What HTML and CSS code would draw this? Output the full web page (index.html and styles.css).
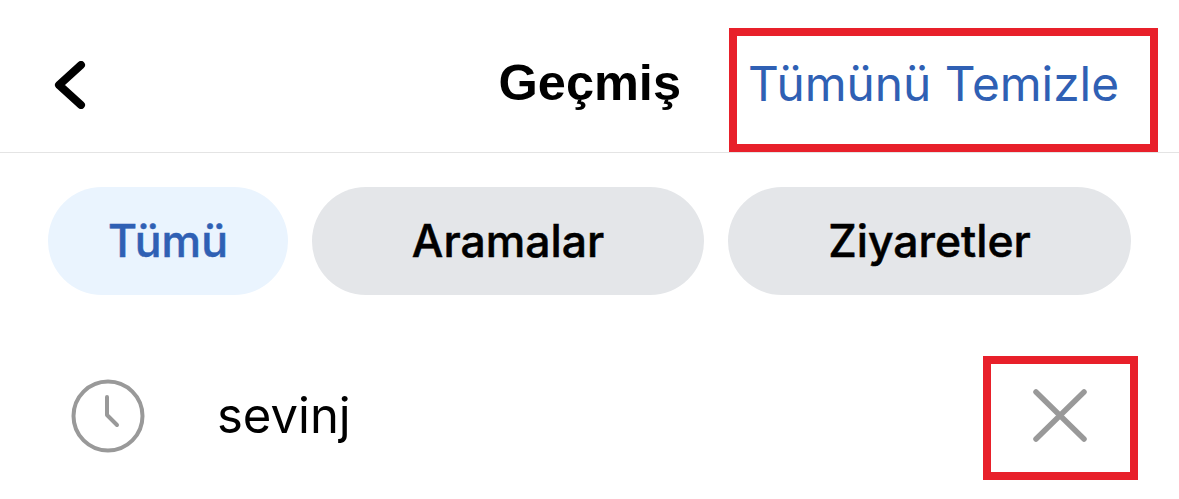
FILE: index.html
```html
<!DOCTYPE html>
<html lang="tr">
<head>
    <meta charset="UTF-8">
    <meta name="viewport" content="width=device-width, initial-scale=1.0">
    <title>Geçmiş</title>
    <link rel="stylesheet" href="styles.css">
</head>
<body>
    <header class="header">
        <button class="back" aria-label="Geri">
            <svg width="32" height="48" viewBox="0 0 32 48">
                <path d="M27 4 L5 24 L27 44" fill="none" stroke="#000" stroke-width="8" stroke-linecap="round" stroke-linejoin="round"/>
            </svg>
        </button>
        <h1 class="title">Geçmiş</h1>
        <button class="clear-all">Tümünü Temizle</button>
    </header>

    <div class="tabs">
        <button class="tab tab-active">Tümü</button>
        <button class="tab">Aramalar</button>
        <button class="tab">Ziyaretler</button>
    </div>

    <div class="history-row">
        <svg class="clock" width="74" height="74" viewBox="0 0 74 74">
            <circle cx="37" cy="37" r="34.5" fill="none" stroke="#999" stroke-width="4"/>
            <path d="M36 18 V36 L46 46" fill="none" stroke="#999" stroke-width="4" stroke-linecap="round" stroke-linejoin="round"/>
        </svg>
        <span class="query">sevinj</span>
        <button class="remove" aria-label="Sil">
            <svg width="56" height="54" viewBox="0 0 56 54">
                <path d="M3 3 L51 50 M51 3 L3 50" fill="none" stroke="#999" stroke-width="5.5" stroke-linecap="round"/>
            </svg>
        </button>
    </div>
</body>
</html>
```

FILE: styles.css
```css
* { box-sizing: border-box; }
body {
    margin: 0;
    height: 499px;
    overflow: hidden;
    background: #fff;
    font-family: Inter, "Liberation Sans", sans-serif;
    color: #000;
}
button {
    font: inherit;
    color: inherit;
    background: none;
    border: none;
    padding: 0;
}
.header {
    display: flex;
    align-items: stretch;
    height: 153px;
    padding: 28px 21px 0 54px;
    border-bottom: 1px solid #e4e4e4;
}
.back {
    display: flex;
    align-items: center;
    margin-bottom: 10px;
}
.title {
    margin: 0 48px 0 auto;
    padding-top: 26px;
    font-family: "Liberation Sans", Arial, sans-serif;
    font-size: 50.5px;
    font-weight: 700;
    line-height: 58px;
}
.clear-all {
    width: 429px;
    padding: 0 0 12px 11px;
    border: 8px solid #e8202a;
    text-align: left;
    font-size: 47.8px;
    color: #2f60b4;
}
.tabs {
    display: grid;
    grid-template-columns: 240px 392px 403px;
    column-gap: 24px;
    margin: 34px 0 0 48px;
    width: 1083px;
}
.tab {
    height: 108px;
    border-radius: 54px;
    background: #e4e6e9;
    font-size: 44.5px;
    font-weight: 500;
    -webkit-text-stroke: 0.5px currentColor;
}
.tab-active {
    background: #eaf4fe;
    color: #2f60b4;
}
.history-row {
    display: flex;
    align-items: center;
    margin-top: 61px;
    padding: 0 41px 0 71px;
    height: 124px;
}
.clock {
    flex: none;
    margin-bottom: 5px;
}
.query {
    margin-left: 72px;
    margin-bottom: 6px;
    font-size: 49px;
}
.remove {
    display: flex;
    align-items: center;
    justify-content: center;
    width: 155px;
    height: 124px;
    padding-bottom: 4px;
    margin-left: auto;
    border: 8px solid #e8202a;
}
```
